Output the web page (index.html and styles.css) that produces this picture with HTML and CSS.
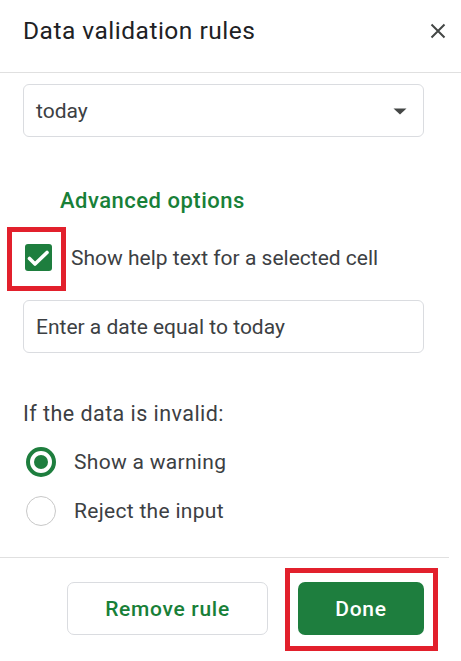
FILE: index.html
```html
<!DOCTYPE html>
<html lang="en">
<head>
<meta charset="utf-8">
<title>Data validation rules</title>
<link rel="stylesheet" href="styles.css">
</head>
<body>
<div class="panel">
  <header class="head">
    <h1 class="title">Data validation rules</h1>
    <button class="close" aria-label="Close">
      <svg width="16" height="16" viewBox="0 0 16 16"><path d="M1.5 1.5 L14.5 14.5 M14.5 1.5 L1.5 14.5" stroke="#444746" stroke-width="2" fill="none"/></svg>
    </button>
  </header>
  <main class="body">
    <div class="select">
      <span>today</span>
      <svg class="caret" width="14" height="7" viewBox="0 0 14 7"><path d="M0.5 0.5 H13.5 L7 6.5 Z" fill="#444746"/></svg>
    </div>
    <div class="adv">Advanced options</div>
    <div class="check-row">
      <span class="checkbox">
        <svg width="27" height="27" viewBox="0 0 27 27"><path d="M4.5 14.5 L10 20 L22 8.5" stroke="#fff" stroke-width="3.6" fill="none" stroke-linecap="round" stroke-linejoin="round"/></svg>
      </span>
      <span class="label">Show help text for a selected cell</span>
    </div>
    <div class="field">Enter a date equal to today</div>
    <div class="invalid">If the data is invalid:</div>
    <div class="radio-row"><span class="radio on"></span><span class="label">Show a warning</span></div>
    <div class="radio-row"><span class="radio"></span><span class="label">Reject the input</span></div>
  </main>
  <footer class="foot">
    <button class="btn btn-outline">Remove rule</button>
    <button class="btn btn-done">Done</button>
  </footer>
</div>
</body>
</html>
```
FILE: styles.css
```css
* { box-sizing: border-box; }
html, body { margin: 0; padding: 0; background: #fff; }
body {
  font-family: Roboto, "Liberation Sans", Arial, sans-serif;
  color: #3c4043;
  width: 461px;
  height: 661px;
  overflow: hidden;
}
.panel { width: 461px; }
.head {
  height: 73px;
  display: flex;
  align-items: center;
  justify-content: space-between;
  padding: 0 14px 12px 23px;
  border-bottom: 1px solid #e0e0e0;
}
.title {
  margin: 0;
  font-size: 24.5px;
  font-weight: 400;
  color: #202124;
  letter-spacing: 0.5px;
}
.close {
  border: 0;
  background: none;
  padding: 0;
  width: 18px;
  height: 18px;
  display: flex;
  align-items: center;
  justify-content: center;
  margin-top: 1px;
}
.body { padding: 11px 37px 0 23px; }
.select, .field {
  height: 53px;
  border: 1px solid #dadce0;
  border-radius: 6px;
  display: flex;
  align-items: center;
  padding: 0 16px 0 12px;
  font-size: 21px;
  color: #3c4043;
}
.select { justify-content: space-between; }
.caret { margin-top: 1px; }
.adv {
  margin-top: 50px;
  padding-left: 37px;
  font-size: 22px;
  font-weight: 500;
  letter-spacing: 0.5px;
  color: #188038;
  line-height: 28px;
}
.check-row {
  margin-top: 29px;
  display: flex;
  align-items: center;
  gap: 19px;
  font-size: 21px;
  height: 27px;
}
.checkbox {
  position: relative;
  width: 27px;
  height: 27px;
  margin-left: 2px;
  border-radius: 3px;
  background: #1e7e3e;
  display: flex;
}
.checkbox::after {
  content: "";
  position: absolute;
  left: -18px;
  top: -17px;
  right: -14px;
  bottom: -20px;
  border: 5px solid #e2202c;
}
.field { margin-top: 29px; }
.invalid {
  margin-top: 47px;
  font-size: 21.5px;
  letter-spacing: 0.45px;
  line-height: 28px;
}
.radio-row {
  height: 49px;
  display: flex;
  align-items: center;
  gap: 18px;
  font-size: 21px;
  letter-spacing: 0.3px;
  padding-left: 3px;
}
.invalid + .radio-row { margin-top: 9px; }
.radio {
  width: 30px;
  height: 30px;
  border-radius: 50%;
  border: 1px solid #c8c8c8;
  display: flex;
  align-items: center;
  justify-content: center;
}
.radio.on { border: 4px solid #1e7e3e; }
.radio.on::before {
  content: "";
  width: 14px;
  height: 14px;
  border-radius: 50%;
  background: #1e7e3e;
}
.foot {
  margin-top: 22px;
  width: 449px;
  border-top: 1px solid #e0e0e0;
  padding: 24px 25px 0 0;
  display: flex;
  justify-content: flex-end;
  gap: 30px;
}
.btn {
  height: 53px;
  border-radius: 7px;
  font-family: inherit;
  font-size: 21px;
  font-weight: 500;
  letter-spacing: 0.7px;
  padding: 0;
}
.btn-outline {
  width: 201px;
  background: #fff;
  border: 1px solid #dadce0;
  color: #188038;
}
.btn-done {
  position: relative;
  width: 126px;
  background: #1e7e3e;
  border: 0;
  color: #fff;
}
.btn-done::after {
  content: "";
  position: absolute;
  left: -13px;
  top: -14px;
  right: -14px;
  bottom: -16px;
  border: 5px solid #e2202c;
}
```
